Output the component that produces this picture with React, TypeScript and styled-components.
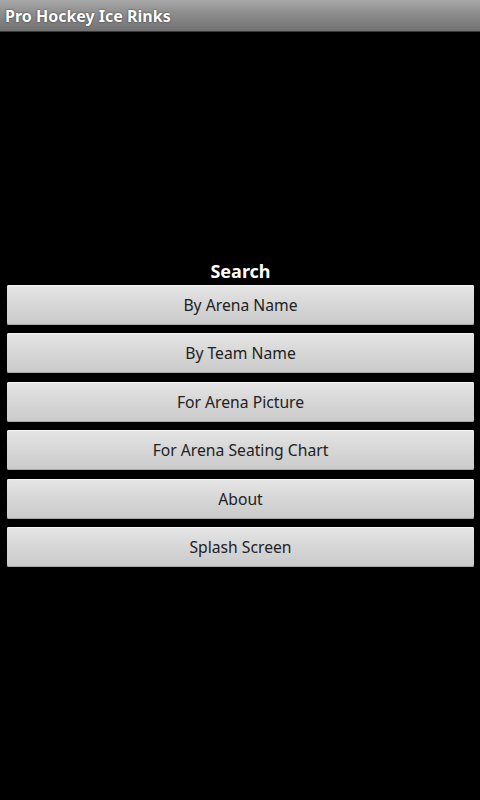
import styled, { createGlobalStyle } from "styled-components";

const Global = createGlobalStyle`
  html, body {
    margin: 0;
    padding: 0;
    background: #000;
  }
  body {
    font-family: "Noto Sans", "Open Sans", "DejaVu Sans", sans-serif;
  }
`;

const Screen = styled.div`
  width: 480px;
  height: 800px;
  background: #000;
  display: flex;
  flex-direction: column;
`;

const TitleBar = styled.div`
  height: 31px;
  flex-shrink: 0;
  display: flex;
  align-items: center;
  padding-left: 5px;
  background: linear-gradient(#a8a8a8, #8c8c8c 45%, #727272);
  border-bottom: 1px solid #3a3a3a;
  color: #fff;
  font-size: 16px;
  font-weight: bold;
  text-shadow: 0 0 2px rgba(0, 0, 0, 0.7);
`;

const Content = styled.div`
  flex: 1;
  display: flex;
  flex-direction: column;
  justify-content: center;
  padding: 0 6px 0 7px;
  margin-top: -6px;
`;

const Heading = styled.div`
  color: #fff;
  font-weight: bold;
  font-size: 18px;
  text-align: center;
  margin-bottom: 2px;
`;

const Menu = styled.div`
  display: flex;
  flex-direction: column;
  gap: 8.5px;
`;

const MenuButton = styled.button`
  height: 40px;
  width: 100%;
  border: none;
  border-radius: 2px;
  background: linear-gradient(#e6e6e6, #d6d6d6 50%, #cacaca);
  box-shadow: inset 0 1px 0 #f4f4f4, inset 0 -1px 0 #a8a8a8;
  color: #222;
  font-family: inherit;
  font-size: 15.7px;
  cursor: pointer;
`;

const items = [
  "By Arena Name",
  "By Team Name",
  "For Arena Picture",
  "For Arena Seating Chart",
  "About",
  "Splash Screen",
];

const App = () => (
  <Screen>
    <Global />
    <TitleBar>Pro Hockey Ice Rinks</TitleBar>
    <Content>
      <Heading>Search</Heading>
      <Menu>
        {items.map((label) => (
          <MenuButton key={label}>{label}</MenuButton>
        ))}
      </Menu>
    </Content>
  </Screen>
);

export default App;
